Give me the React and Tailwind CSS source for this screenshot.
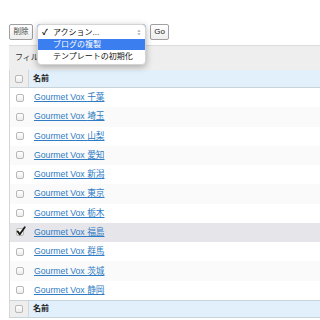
import React from "react";

const rows = ["千葉", "埼玉", "山梨", "愛知", "新潟", "東京", "栃木", "福島", "群馬", "茨城", "静岡"];

const Box = ({ checked }) => (
    <span className="relative block w-[8px] h-[8px] rounded-[2px] border border-[#b8b8b8] bg-gradient-to-b from-white to-[#ececec]">
        {checked && (
            <svg viewBox="0 0 12 12" className="absolute left-[-1px] top-[-3px] w-[10px] h-[10px]">
                <path d="M2 6.5 L4.6 10 L10.5 1.5" fill="none" stroke="#1a1a1a" strokeWidth="2.2" strokeLinecap="round" strokeLinejoin="round" />
            </svg>
        )}
    </span>
);

const HeaderRow = ({ top }) => (
    <div className={`flex h-[18px] ${top ? "border-b" : "border-y"} border-[#c9d3da]`}>
        <div className="w-[19px] flex items-center justify-center bg-[#eeeeee] border-r border-[#d6d6d6]">
            <Box />
        </div>
        <div className="flex-1 flex items-center pl-[4px] bg-[#e1f0fa] text-[8px] font-bold text-[#222]">名前</div>
    </div>
);

export default function App() {
    return (
        <div
            className="relative w-[320px] h-[320px] overflow-hidden bg-white text-[#333]"
            style={{ fontFamily: '"Liberation Sans", "Noto Sans CJK JP", sans-serif' }}
        >
            <div className="pt-[24px] pl-[9px] flex items-center gap-[4px]">
                <button className="w-[24px] h-[16px] text-[7.5px] leading-none border border-[#a0a0a0] rounded-[2px] bg-gradient-to-b from-white to-[#eeeeee] text-[#444]">削除</button>
                <div className="w-[109px] h-[16px] border border-[#7aa7e0] rounded-[3px] bg-white" />
                <button className="w-[19px] h-[16px] text-[8px] leading-none border border-[#a0a0a0] rounded-[2px] bg-gradient-to-b from-white to-[#eeeeee] text-[#222]">Go</button>
            </div>

            <div className="mt-[5px] ml-[9px] h-[25px] bg-[#eeeeee] border-t border-[#dcdcdc] flex items-center pl-[6px] text-[8px] text-[#333]">フィルタ</div>

            <div className="ml-[9px] border-l border-[#d6d6d6]">
                <HeaderRow top />
                {rows.map((name, i) => (
                    <div
                        key={name}
                        className={`flex h-[19.27px] items-center ${i === 7 ? "bg-[#e6e6ea]" : i % 2 ? "bg-[#fafafa]" : "bg-white"}`}
                    >
                        <div className="w-[19px] flex items-center justify-center">
                            <Box checked={i === 7} />
                        </div>
                        <a href="#" className="pl-[5px] text-[8.7px] text-[#2f7cc4] underline underline-offset-[1px]">Gourmet Vox {name}</a>
                    </div>
                ))}
                <HeaderRow />
            </div>

            {/* native select popup */}
            <div className="absolute left-[37px] top-[24px] w-[109px] h-[41px] bg-white rounded-[4px] shadow-[0_2px_7px_rgba(0,0,0,0.3)] border border-[#d4d4d4] text-[8px] text-[#111]">
                <div className="h-[14px] flex items-center pl-[4px] gap-[3px] pt-[1px]">
                    <span className="text-[8px] w-[8px] font-bold">✓</span>
                    <span>アクション...</span>
                    <svg viewBox="0 0 6 10" className="ml-auto mr-[4px] w-[4px] h-[7px]">
                        <path d="M0.5 4 L3 1 L5.5 4 Z M0.5 6 L3 9 L5.5 6 Z" fill="#aaa" />
                    </svg>
                </div>
                <div className="h-[11px] flex items-center pl-[15px] bg-[#3b7ef0] text-white">ブログの複製</div>
                <div className="h-[14px] flex items-center pl-[15px]">テンプレートの初期化</div>
            </div>
        </div>
    );
}
